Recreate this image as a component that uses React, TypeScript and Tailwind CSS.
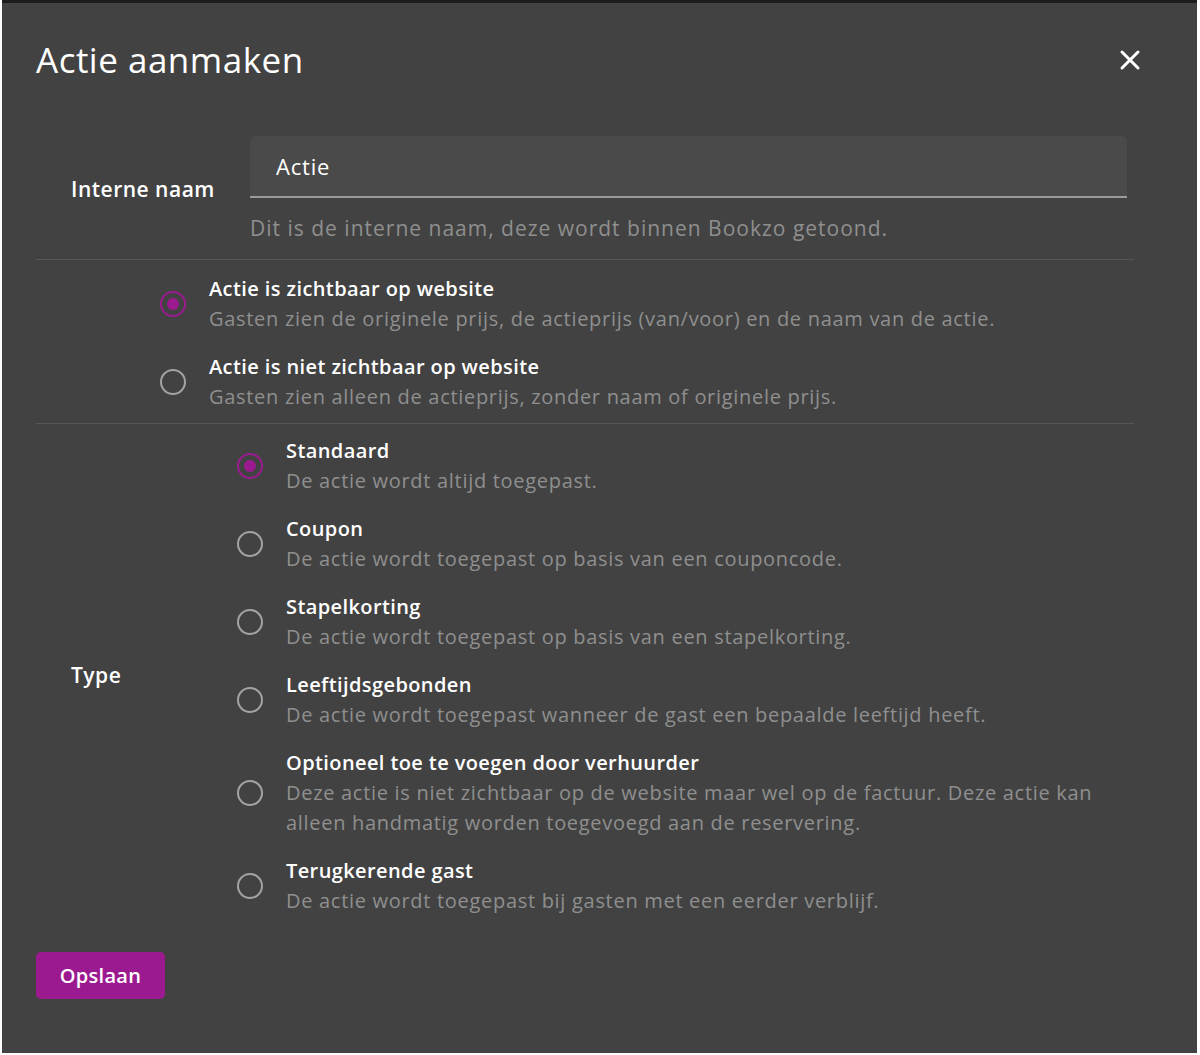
import React, { useState } from "react";

interface Option {
  id: string;
  title: string;
  desc: string;
}

const visibility: Option[] = [
  {
    id: "visible",
    title: "Actie is zichtbaar op website",
    desc: "Gasten zien de originele prijs, de actieprijs (van/voor) en de naam van de actie.",
  },
  {
    id: "hidden",
    title: "Actie is niet zichtbaar op website",
    desc: "Gasten zien alleen de actieprijs, zonder naam of originele prijs.",
  },
];

const types: Option[] = [
  { id: "standard", title: "Standaard", desc: "De actie wordt altijd toegepast." },
  { id: "coupon", title: "Coupon", desc: "De actie wordt toegepast op basis van een couponcode." },
  { id: "stack", title: "Stapelkorting", desc: "De actie wordt toegepast op basis van een stapelkorting." },
  {
    id: "age",
    title: "Leeftijdsgebonden",
    desc: "De actie wordt toegepast wanneer de gast een bepaalde leeftijd heeft.",
  },
  {
    id: "optional",
    title: "Optioneel toe te voegen door verhuurder",
    desc: "Deze actie is niet zichtbaar op de website maar wel op de factuur. Deze actie kan\nalleen handmatig worden toegevoegd aan de reservering.",
  },
  {
    id: "returning",
    title: "Terugkerende gast",
    desc: "De actie wordt toegepast bij gasten met een eerder verblijf.",
  },
];

function Radio({ checked }: { checked: boolean }) {
  return (
    <span
      className={`flex h-[26px] w-[26px] flex-shrink-0 items-center justify-center rounded-full border-[2.5px] ${
        checked ? "border-[#9c1a8f]" : "border-[#a3a3a3]"
      }`}
    >
      {checked && <span className="h-[12px] w-[12px] rounded-full bg-[#9c1a8f]" />}
    </span>
  );
}

function RadioList({
  options,
  value,
  onChange,
}: {
  options: Option[];
  value: string;
  onChange: (v: string) => void;
}) {
  return (
    <div className="flex flex-col gap-[18px]">
      {options.map((o) => (
        <label
          key={o.id}
          onClick={() => onChange(o.id)}
          className="flex cursor-pointer items-center gap-[23px]"
        >
          <Radio checked={value === o.id} />
          <div>
            <div className="text-[20px] font-semibold leading-[30px] tracking-[0.4px] text-white">{o.title}</div>
            <div className="whitespace-pre-line text-[20px] leading-[30px] tracking-[0.7px] text-[#8f8f8f]">
              {o.desc}
            </div>
          </div>
        </label>
      ))}
    </div>
  );
}

export default function App() {
  const [name, setName] = useState("Actie");
  const [visible, setVisible] = useState("visible");
  const [type, setType] = useState("standard");

  return (
    <div
      className="h-[1055px] w-[1200px] bg-white pb-[2px] pl-[2px] pr-[3px]"
      style={{ fontFamily: "'Open Sans', Lato, sans-serif" }}
    >
      <div className="flex h-full flex-col border-t-[3px] border-[#1c1c1c] bg-[#424242] px-[34px]">
        {/* Header */}
        <div className="flex h-[113px] items-center justify-between">
          <h2 className="text-[35px] leading-[40px] tracking-[0.5px] text-white">Actie aanmaken</h2>
          <button className="mr-[22px] text-white">
            <svg width="22" height="22" viewBox="0 0 22 22" fill="none">
              <path d="M3 3 L19 19 M19 3 L3 19" stroke="white" strokeWidth="3" strokeLinecap="round" />
            </svg>
          </button>
        </div>

        <div className="mr-[29px] flex flex-1 flex-col">
          {/* Interne naam */}
          <div className="flex items-center border-b border-[#575757] pb-[19px] pt-[20px]">
            <div className="mt-[3px] w-[214px] pl-[35px] text-[21px] font-semibold tracking-[0.5px] text-white">
              Interne naam
            </div>
            <div className="mr-[7px] flex-1">
              <input
                value={name}
                onChange={(e) => setName(e.target.value)}
                className="h-[62px] w-full rounded-t-[6px] border-b-2 border-[#9a9a9a] bg-[#4a4a4a] px-[26px] text-[22px] tracking-[0.8px] text-white outline-none"
              />
              <div className="mt-[18px] text-[21px] leading-[24px] tracking-[1px] text-[#8f8f8f]">
                Dit is de interne naam, deze wordt binnen Bookzo getoond.
              </div>
            </div>
          </div>

          {/* Zichtbaarheid */}
          <div className="border-b border-[#575757] pb-[11px] pl-[124px] pt-[14px]">
            <RadioList options={visibility} value={visible} onChange={setVisible} />
          </div>

          {/* Type */}
          <div className="flex items-center pt-[12px]">
            <div className="w-[201px] pl-[35px] text-[21px] font-semibold tracking-[0.5px] text-white">Type</div>
            <RadioList options={types} value={type} onChange={setType} />
          </div>

          <div className="pt-[36px]">
            <button className="h-[47px] w-[129px] rounded-[5px] bg-[#9c1a8f] text-[20px] font-semibold tracking-[0.3px] text-white">
              Opslaan
            </button>
          </div>
        </div>
      </div>
    </div>
  );
}
